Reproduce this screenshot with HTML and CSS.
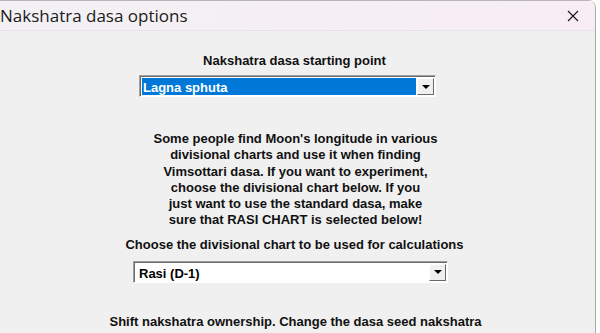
FILE: index.html
```html
<!DOCTYPE html>
<html lang="en">
<head>
    <meta charset="UTF-8">
    <meta name="viewport" content="width=device-width, initial-scale=1.0">
    <title>Nakshatra dasa options</title>
    <link rel="stylesheet" href="styles.css">
</head>
<body>
    <div class="window">
        <!-- Title bar -->
        <div class="titlebar">
            <span class="title">Nakshatra dasa options</span>
            <span class="close">
                <svg width="12" height="12" viewBox="0 0 12 12">
                    <path d="M1 1 L11 11 M11 1 L1 11" stroke="#1a1a1a" stroke-width="1.2" fill="none" />
                </svg>
            </span>
        </div>

        <div class="content">
            <div class="label label-start">Nakshatra dasa starting point</div>
            <div class="combo combo-start">
                <div class="combo-text selected">Lagna sphuta</div>
                <div class="combo-btn"><span class="arrow"></span></div>
            </div>

            <p class="note">
                Some people find Moon's longitude in various<br>
                divisional charts and use it when finding<br>
                Vimsottari dasa. If you want to experiment,<br>
                choose the divisional chart below. If you<br>
                just want to use the standard dasa, make<br>
                sure that RASI CHART is selected below!
            </p>

            <div class="label label-chart">Choose the divisional chart to be used for calculations</div>
            <div class="combo combo-chart">
                <div class="combo-text">Rasi (D-1)</div>
                <div class="combo-btn"><span class="arrow"></span></div>
            </div>

            <div class="label label-shift">Shift nakshatra ownership. Change the dasa seed nakshatra</div>
        </div>
    </div>
</body>
</html>
```

FILE: styles.css
```css
/* Classic dialog look */
body {
    margin: 0;
    background-color: #ffffff;
    font-family: "Liberation Sans", Arial, sans-serif;
    overflow: hidden;
}
.window {
    width: 595px;
    height: 333px;
    background-color: #f0f0f0;
    border-right: 1px solid #a9a9a9;
    border-top-right-radius: 8px;
    overflow: hidden;
}
.titlebar {
    height: 31px;
    display: flex;
    align-items: center;
    justify-content: space-between;
    background: linear-gradient(to right, #f3f1f4, #f7edf3);
    border-bottom: 1px solid #e6e2e6;
    border-top: 1px solid #b9b6b9;
    box-sizing: border-box;
}
.title {
    font-family: "Open Sans", "Noto Sans", sans-serif;
    font-size: 17px;
    color: #1b1b1b;
    margin-left: 0;
}
.close {
    display: flex;
    margin-right: 16px;
}
.content {
    display: flex;
    flex-direction: column;
}
.label {
    font-weight: bold;
    font-size: 13px;
    color: #111;
    text-align: center;
    line-height: 16px;
}
.label-start {
    margin-top: 22px;
    margin-left: -6px;
}
.combo {
    display: flex;
    height: 22px;
    box-sizing: border-box;
    border-top: 1px solid #a0a0a0;
    border-left: 1px solid #a0a0a0;
    border-bottom: 1px solid #ffffff;
    border-right: 1px solid #ffffff;
    box-shadow: inset 1px 1px 0 #696969;
    background-color: #ffffff;
    font-size: 13px;
    font-weight: bold;
}
.combo-start {
    width: 297px;
    margin-left: 139px;
    margin-top: 6px;
}
.combo-chart {
    width: 315px;
    margin-left: 133px;
    margin-top: 8px;
}
.combo-text {
    flex: 1;
    padding: 2px 0 0 3px;
    margin: 2px 0 1px 2px;
    color: #000;
    line-height: 15px;
}
.combo-text.selected {
    background-color: #0078d7;
    color: #ffffff;
    margin: 2px 0 1px 2px;
    padding-left: 1px;
}
.combo-btn {
    width: 17px;
    margin: 2px 1px 1px 1px;
    background-color: #f0f0f0;
    border-top: 1px solid #ffffff;
    border-left: 1px solid #ffffff;
    border-right: 1px solid #696969;
    border-bottom: 1px solid #696969;
    box-sizing: border-box;
    display: flex;
    align-items: center;
    justify-content: center;
}
.arrow {
    width: 0;
    height: 0;
    border-left: 4px solid transparent;
    border-right: 4px solid transparent;
    border-top: 4px solid #000;
}
.note {
    margin: 34px 0 0 0;
    font-weight: bold;
    font-size: 13px;
    line-height: 16.3px;
    text-align: center;
    color: #111;
    margin-left: -4px;
}
.label-chart {
    margin-top: 8px;
    margin-left: -6px;
}
.label-shift {
    margin-top: 31px;
    margin-left: -4px;
}
```
